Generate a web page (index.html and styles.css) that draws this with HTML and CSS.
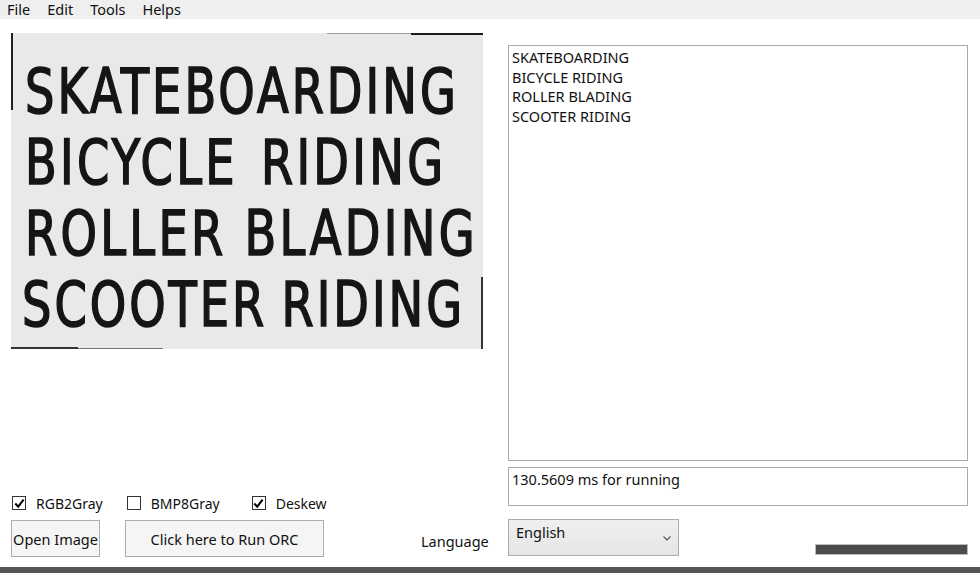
FILE: index.html
```html
<!DOCTYPE html>
<html>
<head>
<meta charset="utf-8">
<link rel="stylesheet" href="styles.css">
</head>
<body>
<div class="menubar">
  <span class="menu-item">File</span>
  <span class="menu-item">Edit</span>
  <span class="menu-item">Tools</span>
  <span class="menu-item">Helps</span>
</div>
<div class="main">
  <div class="left">
    <div class="photo">
      <div class="edge edge-top-gray"></div>
      <div class="edge edge-top-dark"></div>
      <div class="edge edge-left"></div>
      <div class="edge edge-bottom-dark"></div>
      <div class="edge edge-bottom-gray"></div>
      <div class="edge edge-right"></div>
      <div class="sign">
        <span class="sign-line l1">SKATEBOARDING</span>
        <span class="sign-line l2">BICYCLE RIDING</span>
        <span class="sign-line l3">ROLLER BLADING</span>
        <span class="sign-line l4">SCOOTER RIDING</span>
      </div>
    </div>
    <div class="spacer"></div>
    <div class="checks">
      <label class="check c1"><span class="box"><svg width="11" height="11" viewBox="0 0 11 11"><path d="M1.3 5.5 L4.2 8.6 L9.6 1.6" fill="none" stroke="#000" stroke-width="2"/></svg></span>RGB2Gray</label>
      <label class="check c2"><span class="box"></span>BMP8Gray</label>
      <label class="check c3"><span class="box"><svg width="11" height="11" viewBox="0 0 11 11"><path d="M1.3 5.5 L4.2 8.6 L9.6 1.6" fill="none" stroke="#000" stroke-width="2"/></svg></span>Deskew</label>
    </div>
    <div class="actions">
      <button class="btn btn-open">Open Image</button>
      <button class="btn btn-run">Click here to Run ORC</button>
      <span class="lang-label">Language</span>
    </div>
  </div>
  <div class="right">
    <div class="result">SKATEBOARDING<br>BICYCLE RIDING<br>ROLLER BLADING<br>SCOOTER RIDING</div>
    <div class="status">130.5609 ms for running</div>
    <div class="bottom-row">
      <div class="combo"><span>English</span><svg class="chev" width="8" height="5" viewBox="0 0 8 5"><path d="M0.5 0.5 L4 4 L7.5 0.5" fill="none" stroke="#555" stroke-width="1.1"/></svg></div>
      <div class="progress"></div>
    </div>
  </div>
</div>
<div class="footer"></div>
</body>
</html>
```
FILE: styles.css
```css
* { box-sizing: border-box; }
html, body { margin: 0; padding: 0; }
body {
  width: 980px;
  height: 573px;
  overflow: hidden;
  background: #fff;
  font-family: "Noto Sans", "Open Sans", sans-serif;
  color: #111;
  display: flex;
  flex-direction: column;
}
.menubar {
  height: 19px;
  background: #efefef;
  display: flex;
  align-items: center;
  padding-left: 7px;
  font-size: 14.5px;
}
.menu-item { margin-right: 17px; line-height: 19px; }
.main {
  flex: 1;
  display: flex;
}
.left {
  width: 508px;
  padding: 14px 0 10px 11px;
  display: flex;
  flex-direction: column;
}
.photo {
  position: relative;
  width: 472px;
  height: 316px;
  background: #e9e9e9;
  overflow: hidden;
}
.edge { position: absolute; }
.edge-top-gray { left: 316px; top: 0; width: 84px; height: 1px; background: #9a9a9a; }
.edge-top-dark { left: 400px; top: 0; width: 72px; height: 2px; background: #1a1a1a; }
.edge-left { left: 0; top: 0; width: 2px; height: 77px; background: #222; }
.edge-bottom-dark { left: 0; bottom: 0; width: 67px; height: 2px; background: #333; }
.edge-bottom-gray { left: 67px; bottom: 0; width: 85px; height: 1px; background: #777; }
.edge-right { right: 0; top: 244px; width: 2px; height: 72px; background: #333; }
.sign {
  padding-top: 23px;
  padding-left: 14px;
  font-family: "DejaVu Sans Condensed", "DejaVu Sans", sans-serif;
  font-weight: normal;
  font-size: 62px;
  line-height: 71px;
  letter-spacing: 4px;
  color: #151515;
  -webkit-text-stroke: 1.6px #151515;
}
.sign-line {
  display: block;
  white-space: nowrap;
  transform-origin: left center;
  transform: scaleX(0.83);
}
.l1 { letter-spacing: 3.7px; }
.l2 { word-spacing: 6px; }
.l3 { word-spacing: 0; }
.l4 { word-spacing: -4px; letter-spacing: 3.6px; margin-left: -3px; }
.spacer { flex: 1; }
.checks {
  display: flex;
  align-items: center;
  font-size: 14px;
  height: 18px;
  margin-bottom: 8px;
}
.check { display: flex; align-items: center; }
.box {
  width: 14px;
  height: 14px;
  border: 1px solid #333;
  background: #fff;
  margin-right: 10px;
  display: flex;
  align-items: center;
  justify-content: center;
}
.c1 { margin-left: 1px; }
.c2 { margin-left: 24px; }
.c3 { margin-left: 32px; }
.actions {
  display: flex;
  align-items: flex-end;
}
.btn {
  height: 37px;
  border: 1px solid #adadad;
  background: #f5f5f5;
  font-family: "Noto Sans", "Open Sans", sans-serif;
  font-size: 14.5px;
  color: #111;
  padding: 0;
}
.btn-open { width: 89px; }
.btn-run { width: 199px; margin-left: 25px; }
.lang-label {
  font-size: 14.5px;
  margin-left: 97px;
  margin-bottom: 6px;
}
.right {
  width: 460px;
  padding: 26px 0 11px 0;
  display: flex;
  flex-direction: column;
}
.result {
  flex: 1;
  border: 1px solid #ababab;
  padding: 2px 3px;
  font-size: 14.5px;
  line-height: 19.7px;
}
.status {
  margin-top: 6px;
  height: 39px;
  border: 1px solid #ababab;
  padding: 1px 3px;
  font-size: 14.5px;
  line-height: 20px;
}
.bottom-row {
  margin-top: 13px;
  display: flex;
  align-items: flex-end;
  justify-content: space-between;
}
.combo {
  width: 171px;
  height: 37px;
  border: 1px solid #acacac;
  background: linear-gradient(#f0f0f0, #e5e5e5);
  font-size: 14.5px;
  padding: 1px 7px;
  position: relative;
  line-height: 22px;
}
.chev { position: absolute; right: 7px; top: 16px; }
.progress {
  width: 153px;
  height: 11px;
  background: #4b4b4b;
  border: 1px solid #bcbcbc;
  margin-bottom: 1px;
}
.footer {
  height: 6px;
  background: #555;
}
```
